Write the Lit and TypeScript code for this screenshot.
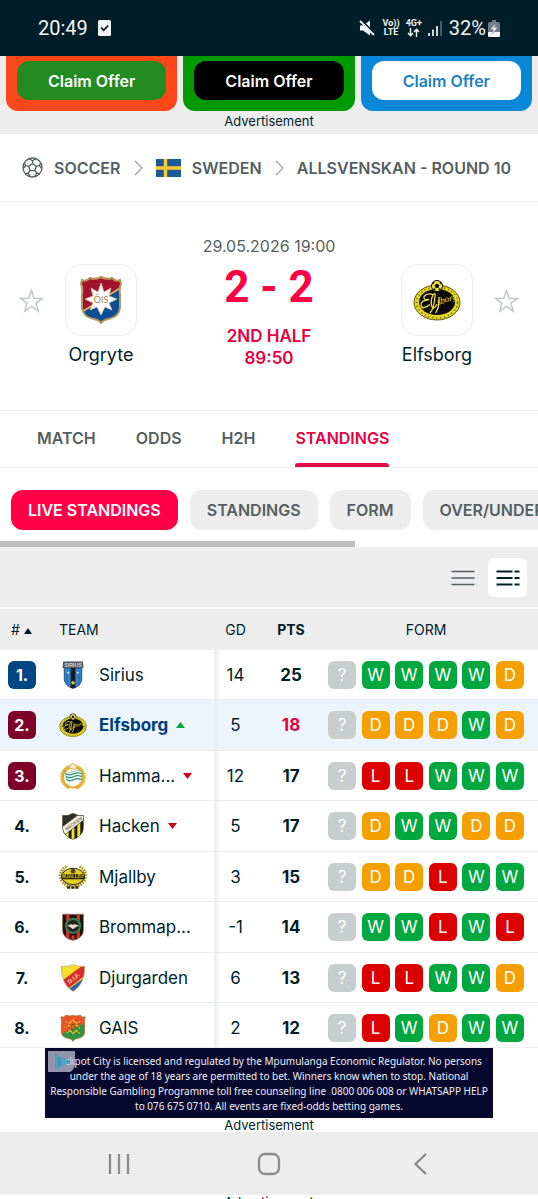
import { LitElement, html, svg, css, TemplateResult } from "lit";
import { customElement, property, state } from "lit/decorators.js";
import { classMap } from "lit/directives/class-map.js";

type Trend = "up" | "down" | "";

interface Row {
  rank: number;
  zone: "top" | "second" | "";
  crest: string;
  team: string;
  trend: Trend;
  gd: number;
  pts: number;
  form: string;
}

const ROWS: Row[] = [
  { rank: 1, zone: "top", crest: "sirius", team: "Sirius", trend: "", gd: 14, pts: 25, form: "?WWWWD" },
  { rank: 2, zone: "second", crest: "elfsborg", team: "Elfsborg", trend: "up", gd: 5, pts: 18, form: "?DDDWD" },
  { rank: 3, zone: "second", crest: "hammarby", team: "Hamma...", trend: "down", gd: 12, pts: 17, form: "?LLWWW" },
  { rank: 4, zone: "", crest: "hacken", team: "Hacken", trend: "down", gd: 5, pts: 17, form: "?DWWDD" },
  { rank: 5, zone: "", crest: "mjallby", team: "Mjallby", trend: "", gd: 3, pts: 15, form: "?DDLWW" },
  { rank: 6, zone: "", crest: "brommapojkarna", team: "Brommap...", trend: "", gd: -1, pts: 14, form: "?WWLWL" },
  { rank: 7, zone: "", crest: "djurgarden", team: "Djurgarden", trend: "", gd: 6, pts: 13, form: "?LLWWD" },
  { rank: 8, zone: "", crest: "gais", team: "GAIS", trend: "", gd: 2, pts: 12, form: "?LWDWW" },
];

/* Club crests, each drawn in a 48 x 48 box. */
const CRESTS: Record<string, TemplateResult> = {
  orgryte: svg`
    <clipPath id="ois"><path d="M5 4Q9 6 13 2Q18 4 24 1Q30 4 35 2Q39 6 43 4L44 8Q42 12 43 18V32Q42 41 31 43Q26 44 24 47Q22 44 17 43Q6 41 5 32V18Q6 12 4 8Z"/></clipPath>
    <g clip-path="url(#ois)">
      <rect width="48" height="48" fill="#0d4f96"/>
      <path d="M0 0H48V10L0 40Z" fill="#a3122f"/>
      <path d="M0 39L48 9" stroke="#d9b878" stroke-width="1.5"/>
    </g>
    <path d="M5 4Q9 6 13 2Q18 4 24 1Q30 4 35 2Q39 6 43 4L44 8Q42 12 43 18V32Q42 41 31 43Q26 44 24 47Q22 44 17 43Q6 41 5 32V18Q6 12 4 8Z" fill="none" stroke="#b99657" stroke-width="2"/>
    <path d="M24 7L27 16L34 12L32 20L40 23L32 27L35 34L28 31L24 39L20 31L13 34L16 27L8 23L16 20L14 12L21 16Z" fill="#fff" stroke="#dcc18b" stroke-width=".7"/>
    <text x="24" y="27" text-anchor="middle" font-size="9" font-family="Lato, sans-serif" fill="#a5803a">ÖIS</text>`,
  elfsborg: svg`
    <ellipse cx="24" cy="26.500" rx="23" ry="17.500" fill="#e3d51d" stroke="#4a460a" stroke-width=".9"/>
    <ellipse cx="24" cy="26.500" rx="20.500" ry="15.500" fill="none" stroke="#5b5510" stroke-width="1.500" stroke-dasharray="1 3"/>
    <ellipse cx="24" cy="26" rx="18" ry="13" fill="#0a0a08"/>
    <circle cx="24" cy="10" r="5.500" fill="#f0e04a" stroke="#0a0a08" stroke-width="1"/>
    <path d="M24 7.500l2.400 1.800-.9 2.700h-3l-.9-2.700Z" fill="#0a0a08"/>
    <path d="M19.500 8l1.500-2M28.500 8L27 6M20.500 13.500l1.800-.6M27.500 13.500l-1.800-.6" stroke="#0a0a08" stroke-width="1.400"/>
    <path d="M20 18.500q-6-2-9 2-1 4 5 3-9 1-8 6 1 5 9-1M17 37q4-4 5-17 1-4-2-1-3 6-1 12 2 3 5-3M22.500 37q4-5 3.500-16" fill="none" stroke="#f0e04a" stroke-width="1.300"/>
    <text x="25" y="29" font-size="9" font-style="italic" font-family="Liberation Serif, serif" fill="#f0e04a" transform="rotate(-18 25 29)">sborg</text>`,
  sirius: svg`
    <path d="M9 12H39V31Q38 43 24 47Q10 43 9 31Z" fill="#2d86d6" stroke="#27415c" stroke-width="1.500"/>
    <rect x="20" y="12" width="8" height="34" fill="#171a1d"/>
    <path d="M14 18v22M34 18v22" stroke="#1f66aa" stroke-width="2"/>
    <circle cx="15.500" cy="20" r="1.500" fill="#fff"/><circle cx="32.500" cy="20" r="1.500" fill="#fff"/>
    <path d="M24 33l1.200 2.600 2.800.3-2 2 .5 2.800L24 39.300l-2.500 1.400.5-2.800-2-2 2.800-.3Z" fill="#f2cf2b"/>
    <path d="M7 1H41L42 12H6Z" fill="#50565c"/>
    <text x="24" y="10.500" text-anchor="middle" font-size="9" font-weight="700" font-family="Liberation Sans, sans-serif" fill="#d4d9dc">SIRIUS</text>`,
  hammarby: svg`
    <circle cx="24" cy="26" r="18.500" fill="none" stroke="#e2af32" stroke-width="6.500" stroke-dasharray="108 10" stroke-dashoffset="-35"/>
    <circle cx="24" cy="26" r="20" fill="none" stroke="#fff3c4" stroke-width="1" stroke-dasharray="2 3"/>
    <circle cx="24" cy="26" r="15" fill="#fff"/>
    <path d="M19 12Q16 6 21 5Q24-1 27 5Q32 6 29 12Z" fill="#f6efd6" stroke="#dba72c" stroke-width="1.500"/>
    <path d="M10 16Q18 20 25 16Q32 13 39 16V31Q32 28 25 31Q18 35 13 31Z" fill="#fff" stroke="#2f8c66" stroke-width=".8"/>
    <path d="M11 20Q18 24 25 20Q32 17 39 20M12 25Q19 29 25 25Q32 22 39 25M13 30Q19 34 25 30Q32 27 39 30" fill="none" stroke="#329a72" stroke-width="2.200"/>
    <path d="M14 45q5-4 10-1q5-3 10 1" fill="none" stroke="#e2af32" stroke-width="3"/>`,
  hacken: svg`
    <clipPath id="hck"><path d="M6 6Q15 8 24 2Q33 8 42 6V28Q40 42 24 47Q8 42 6 28Z"/></clipPath>
    <g clip-path="url(#hck)">
      <rect width="48" height="48" fill="#f1e42d"/>
      <path d="M9 0v48M19 0v48M29 0v48M39 0v48" stroke="#161614" stroke-width="5"/>
      <path d="M0 0H48L0 30Z" fill="#312d27"/>
      <path d="M2 28L38 1L46 11L10 39Z" fill="#f3efe2" stroke="#292620" stroke-width="1"/>
    </g>
    <text x="25" y="23" text-anchor="middle" font-size="8" font-weight="700" font-family="Liberation Sans, sans-serif" fill="#766e5c" transform="rotate(-37 25 20)">HÄCKEN</text>
    <path d="M6 6Q15 8 24 2Q33 8 42 6V28Q40 42 24 47Q8 42 6 28Z" fill="none" stroke="#38342c"/>`,
  mjallby: svg`
    <path d="M13 6Q-2 14 4 29Q9 40 23 41M35 6Q50 14 44 29Q39 40 25 41" fill="none" stroke="#b89c24" stroke-width="5" stroke-dasharray="3 1.500"/>
    <path d="M10 11Q2 18 6 28Q11 38 23 39M38 11Q46 18 42 28Q37 38 25 39" fill="none" stroke="#58500f" stroke-width="1.200"/>
    <ellipse cx="24" cy="23" rx="19" ry="14" fill="#e4cd22" stroke="#211f08" stroke-width="1.500"/>
    <rect x="4" y="19" width="40" height="9" rx="2" fill="#28250b"/>
    <text x="24" y="26.500" text-anchor="middle" font-size="8" font-weight="700" font-family="Liberation Sans, sans-serif" fill="#dcc62a">MJÄLLBY</text>
    <circle cx="24" cy="14" r="4" fill="#4d470f"/>
    <path d="M14 42h20" stroke="#28250b" stroke-width="4" stroke-dasharray="5 2"/>`,
  brommapojkarna: svg`
    <clipPath id="bp"><path d="M6 2H42V30Q41 43 24 47Q7 43 6 30Z"/></clipPath>
    <g clip-path="url(#bp)">
      <rect width="48" height="48" fill="#1b1413"/>
      <path d="M15 0v48M24 38v10M33 0v48" stroke="#e02f26" stroke-width="5.500"/>
    </g>
    <path d="M6 2H42V30Q41 43 24 47Q7 43 6 30Z" fill="none" stroke="#7a6654" stroke-width="1.200"/>
    <circle cx="24" cy="22" r="12" fill="#27221c" stroke="#2f7049" stroke-width="4"/>
    <circle cx="24" cy="22" r="12" fill="none" stroke="#91b592" stroke-width="1" stroke-dasharray="2 3"/>
    <path d="M14 22Q20 18 24 20Q28 18 34 22Q28 24 24 28Q20 24 14 22Z" fill="#e9ddc3"/>`,
  djurgarden: svg`
    <clipPath id="dif"><path d="M4 4Q15 5 24 1Q33 5 44 4Q45 34 24 47Q3 34 4 4Z"/></clipPath>
    <g clip-path="url(#dif)">
      <rect width="48" height="48" fill="#f6e02c"/>
      <path d="M48 20L10 48H48Z" fill="#2666b5"/>
      <path d="M-2 34L44 0L52 14L12 45Z" fill="#d82c30"/>
    </g>
    <text x="25" y="28" text-anchor="middle" font-size="10" font-weight="700" font-family="Liberation Sans, sans-serif" fill="#f6dfb4" transform="rotate(-37 25 24)">D.I.F.</text>
    <path d="M4 4Q15 5 24 1Q33 5 44 4Q45 34 24 47Q3 34 4 4Z" fill="none" stroke="#b8ac80" stroke-width="1.200"/>`,
  gais: svg`
    <clipPath id="gs"><path d="M3 5Q8 7 12 2Q19 5 24 2Q29 5 36 2Q40 7 45 5Q42 12 44 18V31Q43 41 31 42Q26 43 24 47Q22 43 17 42Q5 41 4 31V18Q6 12 3 5Z"/></clipPath>
    <g clip-path="url(#gs)">
      <rect width="48" height="48" fill="#2c9440"/>
      <path d="M0 0H48V14L0 36Z" fill="#ee5428"/>
      <path d="M12 13l6 3 6-6 5 6 7-3M12 24l5-5 6 6 7-6 6 6M13 33l6-5 5 6 6-6 6 6" fill="none" stroke="#f0b62e" stroke-width="1.800"/>
      <circle cx="24" cy="22" r="4" fill="#e9622a" stroke="#234e21"/>
      <path d="M15 10v25M33 10v25" stroke="#365f25" stroke-width="1.200" stroke-dasharray="3 3"/>
    </g>
    <path d="M3 5Q8 7 12 2Q19 5 24 2Q29 5 36 2Q40 7 45 5Q42 12 44 18V31Q43 41 31 42Q26 43 24 47Q22 43 17 42Q5 41 4 31V18Q6 12 3 5Z" fill="none" stroke="#b9793c" stroke-width="1.500"/>`,
};

@customElement("club-crest")
class ClubCrest extends LitElement {
  static styles = css`
    :host { display: block; flex: none; width: 28px; height: 28px; }
    .art { display: block; width: 100%; height: 100%; }
  `;
  @property() name = "";
  render() {
    return html`<svg class="art" viewBox="0 0 48 48" aria-hidden="true">${CRESTS[this.name]}</svg>`;
  }
}

@customElement("status-bar")
class StatusBar extends LitElement {
  static styles = css`
    :host {
      display: flex; align-items: center; flex: none; height: 56px; box-sizing: border-box;
      padding: 0 38px; background: #001e28; color: #f2f6f7;
      font: 400 20px/28px Roboto, sans-serif;
    }
    .clock { margin-right: 10px; }
    .spacer { flex: 1; }
    .mute { margin-right: 8px; }
    .stack {
      display: flex; flex-direction: column; align-items: center; margin-right: 6px;
      font: 700 9px/9px Roboto, sans-serif;
    }
    .signal { margin-right: 7px; }
    .battery { margin-left: 2px; }
    svg { display: block; }
  `;
  render() {
    return html`
      <span class="clock">20:49</span>
      <svg width="13" height="16" viewBox="0 0 13 16"><rect width="13" height="16" rx="1.500" fill="#f2f6f7"/><path d="M3 7.500l2.700 2.700L10.200 5.500" fill="none" stroke="#001e28" stroke-width="1.700"/></svg>
      <span class="spacer"></span>
      <svg class="mute" width="16" height="16" viewBox="0 0 16 16"><path d="M1 5.500h3l7-5v15l-7-5H1Z" fill="#f2f6f7"/><path d="M1.500-.5L16.500 14.500" stroke="#001e28" stroke-width="2"/><path d="M1 1l14 14" stroke="#f2f6f7" stroke-width="1.800"/></svg>
      <span class="stack"><span>Vo))</span><span>LTE</span></span>
      <span class="stack"><span>4G+</span>
        <svg width="13" height="9" viewBox="0 0 13 9"><path d="M3.500 0v7.500M1 5l2.500 2.700L6 5M9.500 9V1.500M7 4l2.500-2.700L12 4" fill="none" stroke="#f2f6f7" stroke-width="1.400"/></svg>
      </span>
      <svg class="signal" width="14" height="15" viewBox="0 0 14 15"><path d="M1 12v3M5 8.500V15M9 5v10" stroke="#f2f6f7" stroke-width="1.700"/><path d="M13 0v15" stroke="#56696f" stroke-width="1.700"/></svg>
      <span>32%</span>
      <svg class="battery" width="12" height="17" viewBox="0 0 12 17"><path d="M4 0h4v2h2.500Q12 2 12 3.500v12Q12 17 10.500 17h-9Q0 17 0 15.500v-12Q0 2 1.500 2H4Z" fill="#6d7d83"/><path d="M0 12h12v3.500Q12 17 10.500 17h-9Q0 17 0 15.500Z" fill="#f2f6f7"/><path d="M7.500 3L2.500 9.500h3L4.500 14l5-6.500h-3Z" fill="#f2f6f7" stroke="#6d7d83" stroke-width=".5"/></svg>
    `;
  }
}

@customElement("offer-strip")
class OfferStrip extends LitElement {
  static styles = css`
    :host { display: block; flex: none; background: #ededed; }
    .cards { display: flex; gap: 6px; padding: 0 6px; }
    .card { flex: 1; padding: 5px 11px 11px; border-radius: 0 0 12px 12px; }
    .claim {
      display: block; width: 100%; height: 39px; border: 0; padding: 0; border-radius: 12px;
      font: 600 16px/20px Inter, sans-serif; color: #fff;
    }
    .orange { background: #ff4719; }
    .orange .claim { background: #228b22; }
    .green { background: #009a00; }
    .green .claim { background: #000; }
    .blue { background: #0a87d6; }
    .blue .claim { background: #fff; color: #1a7fc4; }
    .label { margin: 0; padding: 2px 0 5px; text-align: center; font: 400 13px/16px Inter, sans-serif; color: #001e28; }
  `;
  render() {
    return html`
      <div class="cards">
        ${["orange", "green", "blue"].map((c) => html`<div class="card ${c}"><button class="claim">Claim Offer</button></div>`)}
      </div>
      <p class="label">Advertisement</p>`;
  }
}

@customElement("match-header")
class MatchHeader extends LitElement {
  static styles = css`
    :host { display: block; flex: none; font-family: Inter, sans-serif; color: #001e28; }
    .crumbs {
      display: flex; align-items: center; justify-content: space-between; height: 67px;
      padding: 0 27px 0 22px; border-bottom: 1px solid #eeeeee;
    }
    .crumb {
      display: flex; align-items: center; gap: 11px; white-space: nowrap; text-decoration: none;
      font-weight: 600; font-size: 16px; line-height: 20px; color: #555e61;
    }
    .match { display: flex; align-items: flex-start; padding: 34px 19px 41px; border-bottom: 1px solid #eeeeee; }
    .star { margin-top: 52px; padding: 0; border: 0; background: none; }
    .side { width: 114px; display: flex; flex-direction: column; align-items: center; padding-top: 28px; }
    .logo {
      display: grid; place-items: center; box-sizing: border-box; width: 72px; height: 72px;
      border: 1px solid #eeeeee; border-radius: 16px; background: #fff;
    }
    .logo club-crest { width: 48px; height: 48px; }
    .name { margin-top: 9px; font-size: 18px; line-height: 20px; }
    .center { flex: 1; display: flex; flex-direction: column; align-items: center; }
    .date { font-size: 16px; line-height: 20px; color: #555e61; }
    .score { margin: 9px 0 16px; font: 700 44px/44px Roboto, sans-serif; color: #ff0046; white-space: nowrap; }
    .phase { font-weight: 600; font-size: 17px; line-height: 22px; color: #e6003f; }
    svg { display: block; }
  `;
  private chevron() {
    return html`<svg width="9" height="16" viewBox="0 0 9 16"><path d="M1 1l7 7-7 7" fill="none" stroke="#9aa1a4" stroke-width="1.200"/></svg>`;
  }
  private star(team: string) {
    return html`<button class="star" aria-label="Follow ${team}">
      <svg width="25" height="26" viewBox="0 0 25 26"><path d="M12.500 2.500l2.700 7.700 8.200.2-6.500 4.900 2.400 7.900-6.800-4.700-6.800 4.700 2.400-7.900L1.600 10.400l8.200-.2Z" fill="none" stroke="#c3c7c9" stroke-width="1.500"/></svg>
    </button>`;
  }
  private side(team: string, crest: string) {
    return html`<div class="side"><div class="logo"><club-crest name=${crest}></club-crest></div><span class="name">${team}</span></div>`;
  }
  render() {
    return html`
      <nav class="crumbs">
        <a class="crumb" href="#soccer">
          <svg width="21" height="21" viewBox="0 0 21 21" fill="none" stroke="#555e61" stroke-width="1.300" stroke-linejoin="round">
            <circle cx="10.500" cy="10.500" r="9.500"/>
            <path d="M10.500 6.500l3.800 2.800-1.400 4.400H8.100L6.700 9.300ZM10.500 6.500V3.800M14.300 9.300l2.800-.8M12.900 13.700l1.800 2.300M8.100 13.700L6.300 16M6.700 9.300l-2.800-.8M7 1.800l3.500 2 3.500-2M18.900 6.200l-1.800 2.300 2.700 3M17.500 16.700l-2.800-.7-1.900 3.600M8.200 19.600L6.300 16l-2.800.7M1.200 11.500l2.700-3-1.800-2.300"/>
          </svg>
          SOCCER</a>
        ${this.chevron()}
        <a class="crumb" href="#sweden">
          <svg width="25" height="18" viewBox="0 0 25 18"><path d="M0 0h25v18H0Z" fill="#1b5a93"/><path d="M0 9h25M9.500 0v18" stroke="#fc3" stroke-width="3.400"/></svg>
          SWEDEN</a>
        ${this.chevron()}
        <a class="crumb" href="#allsvenskan">ALLSVENSKAN - ROUND 10</a>
      </nav>
      <section class="match">
        ${this.star("Orgryte")}
        ${this.side("Orgryte", "orgryte")}
        <div class="center">
          <span class="date">29.05.2026 19:00</span>
          <span class="score">2 - 2</span>
          <span class="phase">2ND HALF</span>
          <span class="phase">89:50</span>
        </div>
        ${this.side("Elfsborg", "elfsborg")}
        ${this.star("Elfsborg")}
      </section>`;
  }
}

@customElement("section-nav")
class SectionNav extends LitElement {
  static styles = css`
    :host { display: block; flex: none; font-family: Inter, sans-serif; }
    .tabs { display: flex; gap: 40px; padding: 0 37px; border-bottom: 1px solid #eeeeee; }
    .tab {
      box-sizing: border-box; height: 56px; padding-top: 17px; border-bottom: 4px solid transparent;
      font-weight: 600; font-size: 16px; line-height: 20px; color: #555e61; text-decoration: none;
    }
    .tab.on { color: #e6003f; position: relative; }
    .tab.on::after {
      content: ""; position: absolute; left: 0; right: 0; bottom: -4px; height: 4px;
      border-radius: 3px 3px 0 0; background: #e30a48;
    }
    .chips { display: flex; gap: 12px; padding: 22px 11px 11px; overflow: hidden; }
    .chip {
      flex: none; height: 40px; padding: 0 17px; border: 0; border-radius: 12px; background: #ededed;
      font: 600 16px/20px Inter, sans-serif; color: #555e61; white-space: nowrap;
    }
    .chip.on { background: #ff0046; color: #fff; }
    .thumb { width: 66%; height: 6px; background: #bebfbf; }
  `;
  @state() private tab = "STANDINGS";
  @state() private chip = "LIVE STANDINGS";
  render() {
    return html`
      <nav class="tabs">
        ${["MATCH", "ODDS", "H2H", "STANDINGS"].map((t) => html`<a href="#${t.toLowerCase()}"
          class=${classMap({ tab: true, on: t === this.tab })} @click=${() => (this.tab = t)}>${t}</a>`)}
      </nav>
      <div class="chips">
        ${["LIVE STANDINGS", "STANDINGS", "FORM", "OVER/UNDER"].map((c) => html`<button
          class=${classMap({ chip: true, on: c === this.chip })} @click=${() => (this.chip = c)}>${c}</button>`)}
      </div>
      <div class="thumb"></div>`;
  }
}

@customElement("standings-table")
class StandingsTable extends LitElement {
  static styles = css`
    :host { display: block; flex: none; font-family: Inter, sans-serif; color: #001e28; }
    .tools {
      display: flex; justify-content: flex-end; gap: 6px; padding: 11px 11px 10px;
      background: #ededed; border-bottom: 2px solid #f8f8f8;
    }
    .view { display: grid; place-items: center; width: 39px; height: 39px; padding: 0; border: 0; border-radius: 6px; background: none; }
    .view.on { background: #fff; }
    table { width: 100%; table-layout: fixed; border-collapse: separate; border-spacing: 0; }
    .c-rank { width: 46px; }
    .c-gd { width: 43px; }
    .c-pts { width: 68px; }
    .c-form { width: 213px; }
    th { height: 41px; padding: 0; background: #ededed; font-weight: 400; font-size: 14px; line-height: 20px; }
    th.rank { padding-left: 11px; text-align: left; white-space: nowrap; }
    th.team { padding-left: 13px; text-align: left; }
    th.pts { font-weight: 700; }
    td { box-sizing: border-box; height: 50px; padding: 0; border-bottom: 1px solid #e8eaeb; font-size: 17px; line-height: 20px; text-align: center; }
    tr:nth-child(even) td { height: 51px; }
    td.rank { padding-left: 8px; }
    .num { display: grid; place-items: center; width: 28px; height: 28px; border-radius: 6px; font-weight: 700; font-size: 16px; }
    .num.top { background: #004682; color: #fff; }
    .num.second { background: #7f0029; color: #fff; }
    .club { display: flex; align-items: center; gap: 12px; padding-left: 13px; white-space: nowrap; }
    td.gd { background: linear-gradient(to right, #ebedee, rgba(255, 255, 255, 0) 7px); }
    td.pts { font-weight: 700; }
    .form { display: flex; justify-content: space-between; padding: 0 14px 0 3px; }
    th.form-h { padding: 0 14px 0 3px; }
    .res { display: grid; place-items: center; width: 28px; height: 28px; border-radius: 6px; font-size: 17px; color: #fff; }
    .W { background: #00a83f; }
    .D { background: #f5a000; }
    .L { background: #dc0000; }
    .next { background: #c8cdcd; }
    .here td { background-color: #ecf5fe; }
    .here .name { font-weight: 700; color: #003f7d; }
    .here td.pts { color: #e6003f; }
    .arrow { margin-left: -4px; }
    svg { display: block; }
    .sort { display: inline-block; margin-left: 0; vertical-align: 1px; }
  `;
  private arrow(t: Trend) {
    if (!t) return "";
    return t === "up"
      ? html`<svg class="arrow" width="9" height="6" viewBox="0 0 9 6"><path d="M0 6L4.500 0 9 6Z" fill="#00a83f"/></svg>`
      : html`<svg class="arrow" width="9" height="6" viewBox="0 0 9 6"><path d="M0 0h9L4.500 6Z" fill="#c8000f"/></svg>`;
  }
  render() {
    return html`
      <div class="tools">
        <button class="view" aria-label="Compact view"><svg width="24" height="18" viewBox="0 0 24 18"><path d="M.5 2.500h23M.5 9h23M.5 15.500h23" stroke="#555e61" stroke-width="1.700"/></svg></button>
        <button class="view on" aria-label="Full view"><svg width="24" height="18" viewBox="0 0 24 18"><path d="M.5 2.500h16M18.500 2.500h5M.5 9h16M18.500 9h5M.5 15.500h16M18.500 15.500h5" stroke="#001e28" stroke-width="1.900"/></svg></button>
      </div>
      <table>
        <colgroup><col class="c-rank"><col><col class="c-gd"><col class="c-pts"><col class="c-form"></colgroup>
        <thead>
          <tr>
            <th class="rank"># <svg class="sort" width="8" height="6" viewBox="0 0 8 6"><path d="M0 6l4-6 4 6Z" fill="#001e28"/></svg></th>
            <th class="team">TEAM</th><th>GD</th><th class="pts">PTS</th><th class="form-h">FORM</th>
          </tr>
        </thead>
        <tbody>
          ${ROWS.map((r) => html`<tr class=${classMap({ here: r.team === "Elfsborg" })}>
            <td class="rank"><span class="num ${r.zone}">${r.rank}.</span></td>
            <td><div class="club"><club-crest name=${r.crest}></club-crest><span class="name">${r.team}</span>${this.arrow(r.trend)}</div></td>
            <td class="gd">${r.gd}</td>
            <td class="pts">${r.pts}</td>
            <td><div class="form">${[...r.form].map((f) => html`<span class="res ${f === "?" ? "next" : f}">${f}</span>`)}</div></td>
          </tr>`)}
        </tbody>
      </table>`;
  }
}

@customElement("app-root")
class AppRoot extends LitElement {
  static styles = css`
    :host { display: flex; flex-direction: column; height: 100vh; overflow: hidden; background: #fff; }
    .page { flex: 1; min-height: 0; overflow: hidden; display: flex; flex-direction: column; }
    .sponsor { flex: none; border-top: 1px solid #eeeeee; }
    .notice {
      position: relative; box-sizing: border-box; width: fit-content; min-width: 448px; margin: 0 auto; padding: 6px 0 4px;
      background: #08082e; color: #eeeef6; text-align: center; white-space: pre;
      font: 400 10px/15px "Noto Sans", sans-serif;
    }
    .choices { position: absolute; left: 3px; top: 3px; }
    .label { margin: 0; text-align: center; font: 400 13px/14px Inter, sans-serif; color: #001e28; }
    .keys { display: flex; justify-content: space-around; align-items: center; flex: none; height: 63px; padding: 0 44px; background: #ededed; }
    .key { display: grid; place-items: center; width: 44px; height: 44px; padding: 0; border: 0; background: none; }
    .below { flex: none; height: 4px; overflow: hidden; }
    svg { display: block; }
  `;
  render() {
    return html`
      <status-bar></status-bar>
      <main class="page">
        <offer-strip></offer-strip>
        <match-header></match-header>
        <section-nav></section-nav>
        <standings-table></standings-table>
      </main>
      <aside class="sponsor">
        <div class="notice">Jackpot City is licensed and regulated by the Mpumulanga Economic Regulator. No persons
under the age of 18 years are permitted to bet. Winners know when to stop. National
Responsible Gambling Programme toll free counseling line  0800 006 008 or WHATSAPP HELP
to 076 675 0710. All events are fixed-odds betting games.<svg class="choices" width="27" height="21" viewBox="0 0 27 21"><path d="M0 0h27v14q-1 5-5 7H0Z" fill="#c9c9dc" fill-opacity=".72"/><path d="M7 3l17 7.500L7 19Z" fill="#2fa5c4" fill-opacity=".8"/><path d="M11 6v9" stroke="#5d88b0" stroke-width="3"/></svg></div>
        <p class="label">Advertisement</p>
      </aside>
      <nav class="keys">
        <button class="key" aria-label="Recent apps"><svg width="22" height="22" viewBox="0 0 22 22"><path d="M2 1v20M11 1v20M20 1v20" stroke="#8b8b8b" stroke-width="2.300"/></svg></button>
        <button class="key" aria-label="Home"><svg width="24" height="24" viewBox="0 0 24 24"><rect x="2" y="2" width="20" height="20" rx="6" fill="none" stroke="#8b8b8b" stroke-width="2.300"/></svg></button>
        <button class="key" aria-label="Back"><svg width="24" height="22" viewBox="0 0 24 22"><path d="M19 1L8.500 11 19 21" fill="none" stroke="#8b8b8b" stroke-width="2.300"/></svg></button>
      </nav>
      <div class="below"><p class="label">Advertisement</p></div>`;
  }
}
